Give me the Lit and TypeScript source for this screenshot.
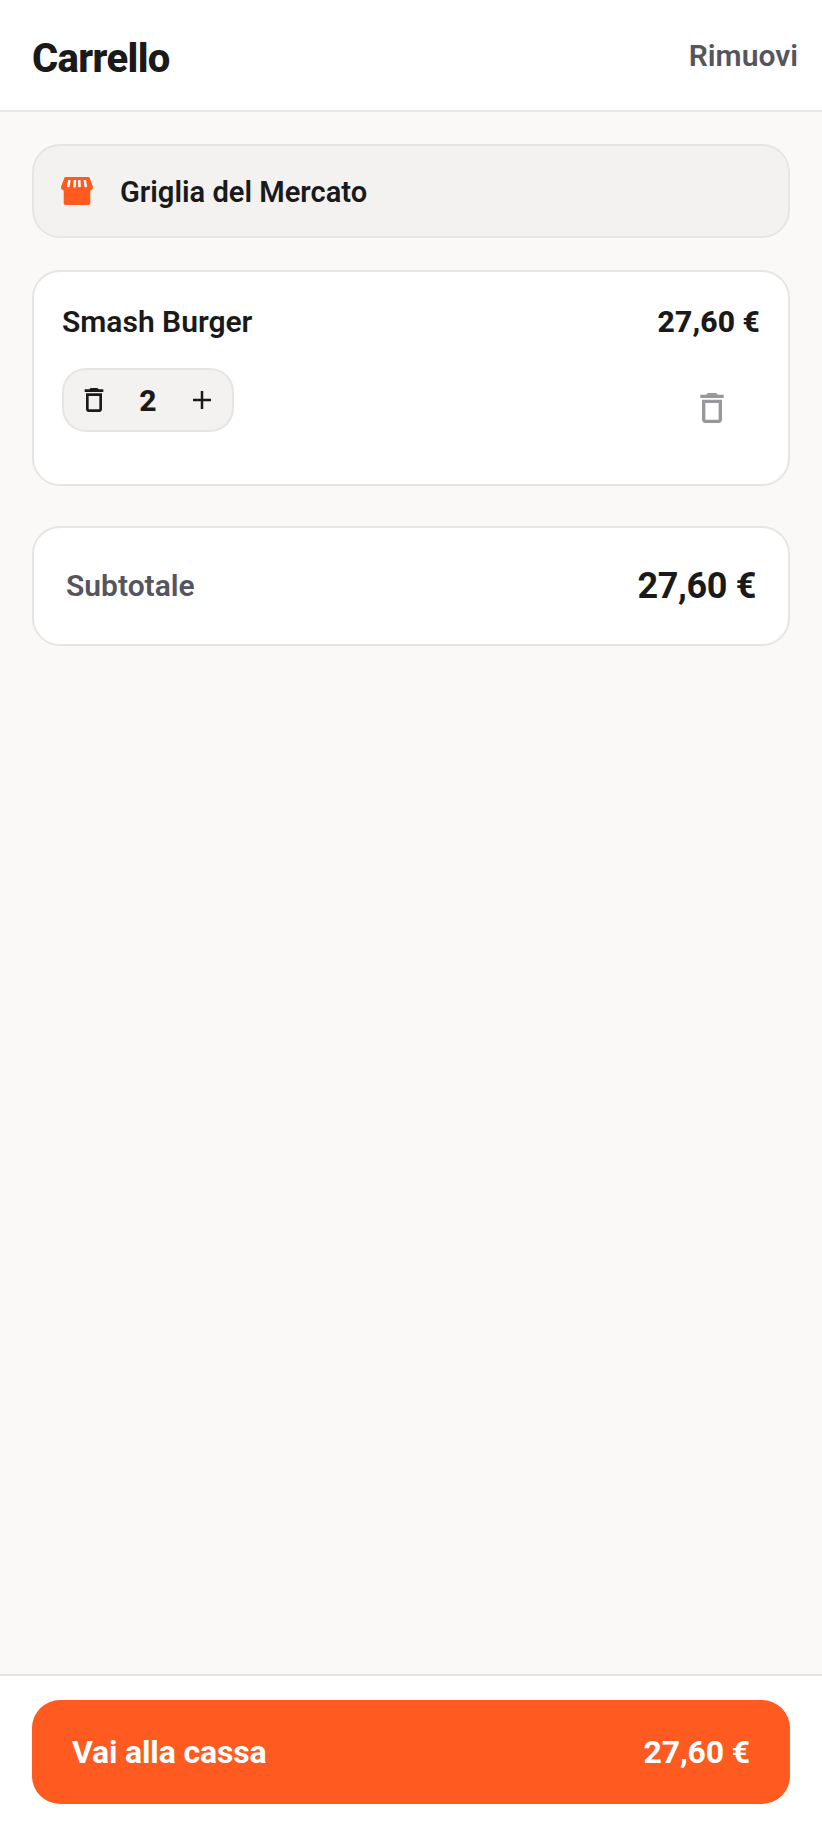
import { LitElement, html, css, svg } from "lit";
import { customElement } from "lit/decorators.js";

const trash = svg`<path d="M6 19c0 1.100.9 2 2 2h8c1.100 0 2-.9 2-2V7H6v12zM8 9h8v10H8V9zm7.500-5-1-1h-5l-1 1H5v2h14V4h-3.500z"/>`;

@customElement("app-root")
export class AppRoot extends LitElement {
  static styles = css`
    :host {
      display: flex;
      flex-direction: column;
      height: 1828px;
      background: #faf9f7;
      font-family: Roboto, "Liberation Sans", sans-serif;
      color: #1a1a1a;
    }
    * { box-sizing: border-box; }
    .header {
      height: 112px;
      flex: none;
      background: #fff;
      border-bottom: 2px solid #e7e5e2;
      padding: 0 24px 0 32px;
      display: flex;
      align-items: center;
      justify-content: space-between;
    }
    .title { font-size: 40px; font-weight: 800; letter-spacing: -0.64px; padding-top: 6px; }
    .clear { font-size: 30px; font-weight: 600; color: #56555f; }
    .main {
      flex: 1;
      padding: 32px;
      display: flex;
      flex-direction: column;
    }
    .store {
      height: 94px;
      border: 2px solid #e7e5e2;
      border-radius: 28px;
      background: #f3f2f0;
      padding: 0 28px 0 26px;
      display: flex;
      align-items: center;
      gap: 26px;
      font-size: 29.1px;
      font-weight: 600;
    }
    .store svg { width: 34px; height: 34px; fill: #ff5a1f; flex: none; }
    .store span { padding-top: 2px; }
    .item {
      margin-top: 32px;
      height: 216px;
      border: 2px solid #e7e5e2;
      border-radius: 28px;
      background: #fff;
      padding: 28px;
    }
    .row { display: flex; justify-content: space-between; align-items: center; }
    .name, .price { font-size: 30px; font-weight: 600; line-height: 44px; }
    .price { font-weight: 800; letter-spacing: 0.1px; }
    .controls { display: flex; justify-content: space-between; align-items: flex-start; margin-top: 24px; }
    .stepper {
      width: 172px;
      height: 64px;
      border: 2px solid #e7e5e2;
      border-radius: 24px;
      background: #f3f2f0;
      display: flex;
      align-items: center;
      justify-content: space-between;
      padding: 0 14px;
      font-size: 30px;
      font-weight: 800;
    }
    .stepper svg { width: 32px; height: 32px; fill: #1a1a1a; }
    .stepper .plus { fill: none; stroke: #1a1a1a; stroke-width: 2.5; }
    .del {
      width: 96px;
      height: 64px;
      display: flex;
      align-items: center;
      justify-content: center;
      margin-top: 8px;
    }
    .del svg { width: 40px; height: 40px; fill: #97979c; }
    .summary {
      margin-top: 40px;
      height: 120px;
      border: 2px solid #e7e5e2;
      border-radius: 28px;
      background: #fff;
      padding: 0 32px;
      display: flex;
      justify-content: space-between;
      align-items: center;
    }
    .sub { font-size: 30px; font-weight: 600; color: #56555f; padding-bottom: 2px; }
    .total { font-size: 36px; font-weight: 700; letter-spacing: -0.36px; }
    .footer {
      flex: none;
      height: 154px;
      background: #fff;
      border-top: 2px solid #e7e5e2;
      padding: 24px 32px;
    }
    .cta {
      height: 104px;
      border-radius: 28px;
      background: #ff5a1f;
      color: #fff;
      padding: 0 40px;
      display: flex;
      align-items: center;
      justify-content: space-between;
      font-size: 32px;
      font-weight: 700;
      letter-spacing: -0.16px;
    }
  `;

  render() {
    return html`
      <div class="header">
        <div class="title">Carrello</div>
        <div class="clear">Rimuovi</div>
      </div>
      <div class="main">
        <div class="store">
          <svg viewBox="0 0 34 34">
            <path d="M6 3h22c1 0 1.600.5 1.900 1.400L33 13c.3 1.800-1 3.400-2.700 3.400V29c0 1.200-.8 2-2 2H5.700c-1.200 0-2-.8-2-2V16.400C2 16.400.7 14.800 1 13l3.100-8.600C4.400 3.500 5 3 6 3z"/>
            <path fill="#fff" d="M8.200 6h2.400l-1 6.500c-.2 1.300-2.800 1-2.600-.3zM13.800 6h2.400l-.3 6.500c-.1 1.300-2.700 1.300-2.700 0zM18 6h2.400l.4 6.200c0 1.300-2.600 1.300-2.700 0zM23.600 6H26l1 6.200c.2 1.300-2.400 1.600-2.600.3z"/>
          </svg>
          <span>Griglia del Mercato</span>
        </div>
        <div class="item">
          <div class="row">
            <span class="name">Smash Burger</span>
            <span class="price">27,60 €</span>
          </div>
          <div class="controls">
            <div class="stepper">
              <svg viewBox="0 0 24 24">${trash}</svg>
              <span>2</span>
              <svg class="plus" viewBox="0 0 32 32"><path d="M16 7v18M7 16h18"/></svg>
            </div>
            <div class="del"><svg viewBox="0 0 24 24">${trash}</svg></div>
          </div>
        </div>
        <div class="summary">
          <span class="sub">Subtotale</span>
          <span class="total">27,60 €</span>
        </div>
      </div>
      <div class="footer">
        <div class="cta">
          <span>Vai alla cassa</span>
          <span>27,60 €</span>
        </div>
      </div>
    `;
  }
}
